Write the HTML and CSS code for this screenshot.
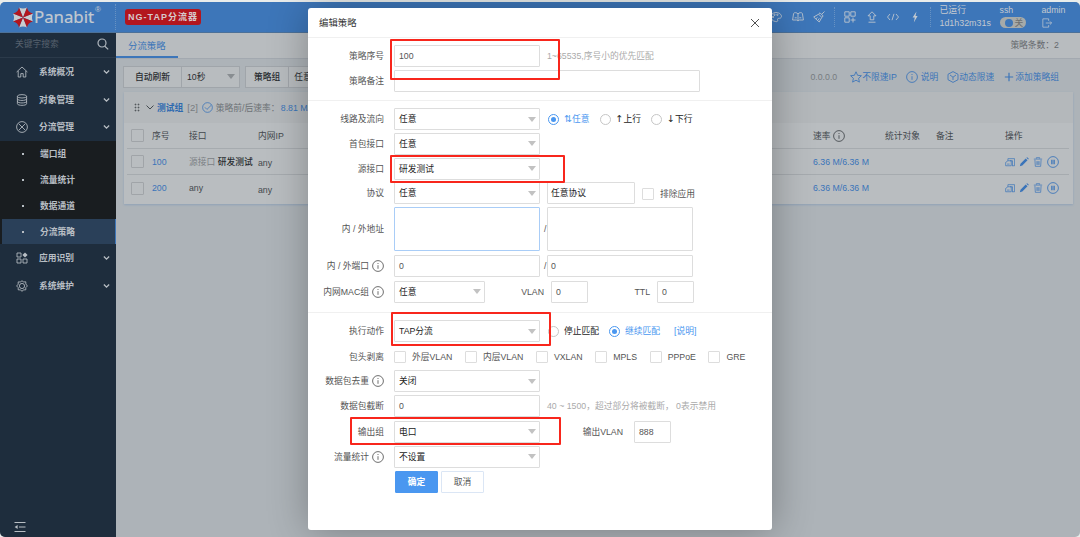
FILE: index.html
```html
<!DOCTYPE html>
<html lang="zh-CN">
<head>
    <meta charset="UTF-8">
    <meta name="viewport" content="width=device-width, initial-scale=1.0">
    <title>Panabit</title>
    <link rel="stylesheet" href="styles.css">
</head>
<body>
    <svg class="sprite">
        <symbol id="i-search" viewBox="0 0 12 12"><circle cx="5" cy="5" r="4"/><path d="M7.8 8.2l3.4 3.2"/></symbol>
        <symbol id="i-home" viewBox="0 0 12 12"><path d="M.6 6L6 1l5.400 5M2.200 5v6h2.600V7.600h2.400V11h2.600V5"/></symbol>
        <symbol id="i-db" viewBox="0 0 12 12"><ellipse cx="6" cy="2.300" rx="4.600" ry="1.700"/><path d="M1.400 2.300v7.400c0 2.200 9.200 2.200 9.200 0V2.300M1.400 4.800c0 2.200 9.200 2.200 9.200 0M1.400 7.300c0 2.200 9.200 2.200 9.200 0"/></symbol>
        <symbol id="i-flow" viewBox="0 0 12 12"><circle cx="6" cy="6" r="5.400"/><path d="M2.800 2.800l6.400 6.400M9.200 2.800L2.800 9.200"/></symbol>
        <symbol id="i-apps" viewBox="0 0 12 12"><path d="M1 1h4v4H1zM1 7h4v4H1zM7 7h4v4H7z"/><path class="fill" d="M9 .4L11.600 3 9 5.600 6.400 3z"/></symbol>
        <symbol id="i-gear" viewBox="0 0 12 12"><circle cx="6" cy="6" r="2.600"/><path d="M6 .6l1.300 1.400 2.500-.2v2.200L11.400 6l-1.600 1.600v2.200l-2.500.1L6 11.400 4.700 9.900l-2.500-.1V7.600L.6 6l1.600-1.800V1.900l2.500.1z"/></symbol>
        <symbol id="i-down" viewBox="0 0 8 6"><path d="M1 1.300l3 3 3-3"/></symbol>
        <symbol id="i-fold" viewBox="0 0 12 12"><path d="M.5 1.500h11M5 6h6.500M.5 10.500h11"/><path class="fill" d="M3.600 4v4L.6 6z"/></symbol>
        <symbol id="i-palette" viewBox="0 0 12 12"><path d="M6 1.500c6 0 7 6 3.200 5.800-2-.1-1.800 1-1.500 1.800.5 1.400-1 1.700-2 1.500C-1 9.500-.5 1.500 6 1.500z"/><circle cx="3" cy="6" r=".7"/><circle cx="4.500" cy="3.800" r=".7"/><circle cx="7.400" cy="3.800" r=".7"/></symbol>
        <symbol id="i-book" viewBox="0 0 12 12"><path d="M6 3C5 1.300 2.300 1.300 1.600 2.500L.6 9h4.200L6 10l1.200-1h4.200l-1-6.500C9.700 1.300 7 1.300 6 3zM6 3v6.500M2.700 6.800h2M7.300 6.800h2"/></symbol>
        <symbol id="i-brush" viewBox="0 0 12 12"><path d="M11.500.5L8.800 3.200M7 1.800L10.200 5 8.800 6.400 5.600 3.200zM5.600 3.200L.7 6l5.500 5 2.600-4.600M3 7.700l1.500-1.200M5 9.300l1.300-2"/></symbol>
        <symbol id="i-grid" viewBox="0 0 12 12"><path d="M.8.8h4.400v4.400H.8zM6.800.8h4.400v4.400H6.800zM.8 6.800h4.400v4.400H.8zM9 6.500v5M6.500 9h5"/></symbol>
        <symbol id="i-up" viewBox="0 0 12 12"><path d="M6 .8l4 4H7.800v4H4.200v-4H2zM2.500 11.200h7"/></symbol>
        <symbol id="i-code" viewBox="0 0 12 12"><path d="M3 3L.5 6 3 9M9 3l2.500 3L9 9M7 2.800L5 9.200"/></symbol>
        <symbol id="i-bolt" viewBox="0 0 12 12"><path class="fill" d="M7.500 .5L3.600 6.600h2.200L4.800 11.500l3.800-6.400H6.500z"/></symbol>
        <symbol id="i-exit" viewBox="0 0 12 12"><path d="M8 3.500V1H1v10h7V8.500M4.500 6h7M9.500 4l2 2-2 2"/></symbol>
        <symbol id="i-star" viewBox="0 0 12 12"><path d="M6 .8l1.600 3.500 3.800.4-2.800 2.600.8 3.800L6 9.200l-3.400 1.900.8-3.800L.6 4.700l3.800-.4z"/></symbol>
        <symbol id="i-info" viewBox="0 0 12 12"><circle cx="6" cy="6" r="5.400"/><path d="M6 5.200v3.600M6 3v1"/></symbol>
        <symbol id="i-cube" viewBox="0 0 12 12"><path d="M6 .6l5 2.700v5.400l-5 2.700-5-2.700V3.300zM3 4l3 2.200L9 4M6 6.200V9"/></symbol>
        <symbol id="i-plus" viewBox="0 0 12 12"><path d="M6 1v10M1 6h10"/></symbol>
        <symbol id="i-check" viewBox="0 0 12 12"><circle cx="6" cy="6" r="5.300"/><path d="M3.200 5.800l2.200 2.300 4.900-4.800"/></symbol>
        <symbol id="i-copy" viewBox="0 0 12 12"><path d="M3.500 4.500V2h8v8.500h-3M.8 6.500L3.500 4.500h4v6H.8zM6 4.500h3v6M2.500 8.500h3"/></symbol>
        <symbol id="i-pen" viewBox="0 0 12 12"><path class="fill" d="M1 11l.8-3L8 1.800l2.200 2.200L4 10.200zM8.800 1l1-.8 2 2-.8.9z"/></symbol>
        <symbol id="i-trash" viewBox="0 0 12 12"><path d="M4 2V.8h4V2M1 2.500h10M2.300 3.500l.5 7.700h6.400l.5-7.700M4.700 5v4.500M6 5v4.500M7.300 5v4.500"/></symbol>
        <symbol id="i-pause" viewBox="0 0 12 12"><circle cx="6" cy="6" r="5.400"/><path class="bar" d="M4.900 3.800v4.400M7.100 3.800v4.400"/></symbol>
        <symbol id="i-close" viewBox="0 0 12 12"><path d="M2 2l8 8M10 2l-8 8"/></symbol>
    </svg>

    <div class="app">
        <header class="header">
            <svg class="logo" viewBox="0 0 20 20">
                <path fill="#c9cccf" d="M10 10L6 0q4 2 8 0zM10 10l10-4q-2 4 0 8zM10 10l4 10q-4-2-8 0zM10 10L0 14q2-4 0-8z"/>
                <path fill="#b3161e" d="M10 10L0 6q5-1 6-6zM10 10l4-10q1 5 6 6zM10 10l10 4q-5 1-6 6zM10 10L6 20q-1-5-6-6z"/>
            </svg>
            <span class="brand">Panabit</span><sup class="reg">®</sup>
            <span class="product">NG-TAP分流器</span>
            <div class="tools">
                <svg><use href="#i-palette"/></svg>
                <svg><use href="#i-book"/></svg>
                <svg><use href="#i-brush"/></svg>
            </div>
            <div class="tools system">
                <svg><use href="#i-grid"/></svg>
                <svg><use href="#i-up"/></svg>
                <svg><use href="#i-code"/></svg>
                <svg><use href="#i-bolt"/></svg>
            </div>
            <div class="stat uptime"><span>已运行</span><span>1d1h32m31s</span></div>
            <div class="stat ssh"><span>ssh</span><span class="toggle"><i></i>关</span></div>
            <div class="stat user"><span>admin</span><svg><use href="#i-exit"/></svg></div>
        </header>

        <div class="body">
            <aside class="sidebar">
                <div class="search"><span>关键字搜索</span><svg><use href="#i-search"/></svg></div>
                <div class="menu"><svg><use href="#i-home"/></svg><span>系统概况</span><svg class="arrow"><use href="#i-down"/></svg></div>
                <div class="menu"><svg><use href="#i-db"/></svg><span>对象管理</span><svg class="arrow"><use href="#i-down"/></svg></div>
                <div class="menu"><svg><use href="#i-flow"/></svg><span>分流管理</span><svg class="arrow"><use href="#i-down"/></svg></div>
                <div class="submenu">
                    <div>端口组</div>
                    <div>流量统计</div>
                    <div>数据通道</div>
                    <div class="active">分流策略</div>
                </div>
                <div class="menu"><svg><use href="#i-apps"/></svg><span>应用识别</span><svg class="arrow"><use href="#i-down"/></svg></div>
                <div class="menu"><svg><use href="#i-gear"/></svg><span>系统维护</span><svg class="arrow"><use href="#i-down"/></svg></div>
                <svg class="fold"><use href="#i-fold"/></svg>
            </aside>

            <main class="content">
                <div class="tabs"><span class="tab">分流策略</span><span class="count">策略条数：2</span></div>
                <div class="toolbar">
                    <div class="combo refresh"><b>自动刷新</b><span>10秒</span><i class="caret"></i></div>
                    <div class="combo group"><b>策略组</b><span>任意</span></div>
                    <div class="links">
                        <span class="ip">0.0.0.0</span>
                        <a class="star"><svg><use href="#i-star"/></svg>不限速IP</a>
                        <a class="help"><svg><use href="#i-info"/></svg>说明</a>
                        <a class="dyn"><svg><use href="#i-cube"/></svg>动态限速</a>
                        <a class="add"><svg><use href="#i-plus"/></svg>添加策略组</a>
                    </div>
                </div>
                <section class="card">
                    <div class="card-head">
                        <span class="grip"></span>
                        <svg class="arrow"><use href="#i-down"/></svg>
                        <b>测试组</b><span class="num">[2]</span>
                        <svg class="check"><use href="#i-check"/></svg>
                        <span class="rate">策略前/后速率：</span><a>8.81 M/8.81 M</a>
                    </div>
                    <div class="row head">
                        <i class="box"></i><span>序号</span><span>接口</span><span>内网IP</span>
                        <span class="with-icon">速率<svg><use href="#i-info"/></svg></span><span>统计对象</span><span>备注</span><span>操作</span>
                    </div>
                    <div class="row">
                        <i class="box"></i><a>100</a><span><em>源接口</em> <b>研发测试</b></span><span class="low">any</span>
                        <a>6.36 M/6.36 M</a><span></span><span></span>
                        <span class="ops"><svg><use href="#i-copy"/></svg><svg><use href="#i-pen"/></svg><svg><use href="#i-trash"/></svg><svg class="pause"><use href="#i-pause"/></svg></span>
                    </div>
                    <div class="row">
                        <i class="box"></i><a>200</a><span>any</span><span class="low">any</span>
                        <a>6.36 M/6.36 M</a><span></span><span></span>
                        <span class="ops"><svg><use href="#i-copy"/></svg><svg><use href="#i-pen"/></svg><svg><use href="#i-trash"/></svg><svg class="pause"><use href="#i-pause"/></svg></span>
                    </div>
                </section>
            </main>
        </div>
    </div>

    <div class="modal">
        <div class="modal-title"><span>编辑策略</span><svg><use href="#i-close"/></svg></div>
        <div class="fields first">
            <div class="field"><label>策略序号</label><div class="input wide">100</div><span class="hint">1~65535,序号小的优先匹配</span></div>
            <div class="field"><label>策略备注</label><div class="input full"></div></div>
        </div>
        <div class="fields second">
            <div class="field"><label>线路及流向</label><div class="input wide dark">任意<i class="caret"></i></div>
                <span class="radio on"><i></i><em>⇅</em>任意</span><span class="radio"><i></i><em>↑</em>上行</span><span class="radio"><i></i><em>↓</em>下行</span>
            </div>
            <div class="field"><label>首包接口</label><div class="input wide dark">任意<i class="caret"></i></div></div>
            <div class="field"><label>源接口</label><div class="input wide dark">研发测试<i class="caret"></i></div></div>
            <div class="field"><label>协议</label><div class="input wide dark">任意<i class="caret"></i></div><div class="input proto dark">任意协议</div><span class="tick exclude"><i class="box"></i>排除应用</span></div>
            <div class="field tall"><label>内 / 外地址</label><div class="input wide focus"></div><span class="slash">/</span><div class="input half"></div></div>
            <div class="field port"><label>内 / 外端口<svg><use href="#i-info"/></svg></label><div class="input wide">0</div><span class="slash">/</span><div class="input half">0</div></div>
            <div class="field mac"><label>内网MAC组<svg><use href="#i-info"/></svg></label><div class="input small dark">任意<i class="caret"></i></div><span class="sub vlan">VLAN</span><div class="input tiny">0</div><span class="sub ttl">TTL</span><div class="input tiny">0</div></div>
        </div>
        <div class="fields third">
            <div class="field"><label>执行动作</label><div class="input wide dark">TAP分流<i class="caret"></i></div>
                <span class="radio stop"><i></i>停止匹配</span><span class="radio on next"><i></i>继续匹配</span><a class="explain">[说明]</a>
            </div>
            <div class="field strip"><label>包头剥离</label>
                <span class="tick"><i class="box"></i>外层VLAN</span><span class="tick"><i class="box"></i>内层VLAN</span><span class="tick"><i class="box"></i>VXLAN</span><span class="tick"><i class="box"></i>MPLS</span><span class="tick"><i class="box"></i>PPPoE</span><span class="tick"><i class="box"></i>GRE</span>
            </div>
            <div class="field"><label>数据包去重<svg><use href="#i-info"/></svg></label><div class="input wide dark">关闭<i class="caret"></i></div></div>
            <div class="field"><label>数据包截断</label><div class="input wide">0</div><span class="hint">40 ~ 1500，超过部分将被截断， 0表示禁用</span></div>
            <div class="field"><label>输出组</label><div class="input wide dark">电口<i class="caret"></i></div><span class="sub out">输出VLAN</span><div class="input tiny">888</div></div>
            <div class="field"><label>流量统计<svg><use href="#i-info"/></svg></label><div class="input wide dark">不设置<i class="caret"></i></div></div>
            <div class="buttons"><button class="primary">确定</button><button>取消</button></div>
        </div>
        <div class="mark mark-order"></div>
        <div class="mark mark-source"></div>
        <div class="mark mark-action"></div>
        <div class="mark mark-output"></div>
    </div>
</body>
</html>
```

FILE: styles.css
```css
* {
    box-sizing: border-box;
}

body {
    margin: 0;
    padding-top: 2px;
    width: 1080px;
    height: 537px;
    overflow: hidden;
    background-color: #e9eceb;
    font-family: 'Liberation Sans', 'Noto Sans CJK SC', sans-serif;
    font-size: 8.75px;
    line-height: 12px;
    color: #43484d;
}

svg {
    width: 12px;
    height: 12px;
    flex: none;
    fill: none;
    stroke: currentColor;
    stroke-width: .85;
}

.sprite {
    display: none;
}

.fill {
    fill: currentColor;
    stroke: none;
}

.bar {
    stroke-width: 1.3;
}

i, em {
    font-style: normal;
}

a {
    color: #3a74b9;
}

.app {
    height: 535px;
    border-radius: 5px;
    overflow: hidden;
    background-color: #adb3b8;
}

/* header */
.header {
    display: flex;
    align-items: center;
    height: 31px;
    background-color: #3d76b9;
    border-bottom: 1px solid #4c7199;
    color: #c3c9d0;
}

.logo {
    width: 20px;
    height: 21px;
    margin-left: 13px;
    stroke: none;
}

.brand {
    width: 61px;
    margin-left: 1px;
    font-family: 'Noto Sans', sans-serif;
    font-size: 16.8px;
    line-height: 28px;
    -webkit-text-stroke: .2px #c3c9d0;
}

.reg {
    width: 21px;
    height: 26px;
    font-size: 8px;
    border-right: 1px dotted #6792c3;
}

.product {
    width: 76px;
    height: 16px;
    margin-left: 9px;
    border-radius: 3px;
    background-color: #b3161e;
    color: #d6c9cc;
    font-size: 9px;
    font-weight: bold;
    line-height: 16px;
    letter-spacing: 1px;
    text-align: center;
    white-space: nowrap;
}

.tools {
    display: flex;
    align-items: center;
    gap: 9.500px;
    height: 20px;
    margin-left: 569px;
    padding-right: 9px;
    border-right: 1px dotted #6792c3;
}

.tools.system {
    margin-left: 9px;
    padding-right: 9px;
}

.stat {
    display: flex;
    flex-direction: column;
    gap: 1px;
    height: 26px;
    margin-left: 9px;
    white-space: nowrap;
}

.uptime {
    width: 51px;
    font-size: 8.9px;
}

.ssh {
    width: 27px;
}

.user {
    margin-left: 15px;
}

.user svg {
    width: 10px;
    height: 10px;
    margin-top: 1px;
}

.toggle {
    display: flex;
    align-items: center;
    width: 26px;
    height: 11px;
    padding-left: 5px;
    border-radius: 6px;
    background-color: #a6aaa9;
    color: #6d6f6f;
}

.toggle i {
    width: 8px;
    height: 8px;
    margin-right: 2px;
    border-radius: 50%;
    background-color: #3d76b9;
}

/* sidebar */
.body {
    display: flex;
    height: 504px;
}

.sidebar {
    display: flex;
    flex-direction: column;
    width: 116px;
    background-color: #1e2d3d;
    color: #b8bec4;
    font-weight: bold;
}

.search {
    display: flex;
    align-items: center;
    justify-content: space-between;
    height: 25px;
    padding: 0 7px 2px 15px;
    border-bottom: 1px solid #2b3a4a;
    color: #56616d;
    font-weight: normal;
}

.search svg {
    color: #b0b7be;
    stroke-width: 1.2;
}

.menu {
    display: flex;
    align-items: center;
    height: 27.800px;
    padding: 0 6px 0 15.500px;
}

.menu span {
    flex: 1;
    margin-left: 11.500px;
}

.menu .arrow {
    width: 7px;
    height: 6px;
    stroke-width: 1.500;
}

.submenu {
    background-color: #191d20;
}

.submenu div {
    display: flex;
    align-items: center;
    height: 26px;
    padding-left: 22px;
}

.submenu div::before {
    content: "";
    width: 2px;
    height: 2px;
    margin-right: 16px;
    background-color: #b8bec4;
}

.submenu .active {
    height: 25px;
    margin-left: 2px;
    padding-left: 20px;
    background-color: #2a4059;
    border-right: 1px solid #3d76b9;
}

.fold {
    margin: auto 0 4px 14px;
    stroke-width: 1.2;
}

/* content */
.content {
    flex: 1;
    min-width: 0;
}

.tabs {
    display: flex;
    justify-content: space-between;
    height: 26px;
    padding-right: 21px;
    border-bottom: 1px solid #a3a9b0;
    background-color: #b8bcbf;
    line-height: 25px;
}

.tab {
    width: 62px;
    padding-left: 12px;
    border-bottom: 2px solid #3d76b9;
    color: #3a74b9;
    font-size: 9.400px;
}

.count {
    color: #65696d;
}

.toolbar {
    display: flex;
    align-items: center;
    height: 33px;
    padding: 2px 21px 0 7px;
}

.combo {
    display: flex;
    align-items: center;
    height: 22px;
    border: 1px solid #a0a5aa;
    background-color: #b8bcbf;
}

.combo b {
    padding: 0 11px;
    border-right: 1px solid #a0a5aa;
    line-height: 20px;
    font-weight: 500;
    color: #292d31;
}

.combo span {
    padding-left: 5px;
    color: #292d31;
}

.refresh {
    width: 117px;
}

.group {
    width: 130px;
    margin-left: 5px;
}

.group b {
    padding: 0 8px;
}

.caret {
    margin: 0 3px 0 auto;
    border: 4px solid transparent;
    border-top: 5px solid #c2c2c2;
    border-bottom: 0;
}

.combo .caret {
    margin-right: 4px;
    border-top-color: #888d91;
}

.links {
    display: flex;
    align-items: center;
    margin-left: auto;
}

.links a {
    display: flex;
    align-items: center;
}

.ip {
    margin-right: 13px;
    color: #777c80;
}

.help, .dyn {
    margin-left: 9px;
}

.help svg {
    margin-right: 3px;
}

.add {
    margin-left: 10px;
}

.add svg {
    width: 10px;
    height: 10px;
    margin-right: 1px;
    stroke-width: 1.4;
}

.card {
    width: 949px;
    height: 112px;
    margin-left: 8px;
    background-color: #b9bdc0;
    box-shadow: 0 1px 2px #8fa2b8;
}

.card-head {
    display: flex;
    align-items: center;
    height: 31px;
    padding-left: 10px;
    background-color: #b4b8bb;
}

.card-head b {
    margin-left: 2px;
    color: #2e6ab0;
}

.grip {
    width: 6px;
    height: 9px;
    margin-right: 5px;
    background-image: radial-gradient(circle, #53585c 0.8px, transparent 1.1px);
    background-size: 3px 3px;
}

.card-head .arrow {
    width: 10px;
    height: 7px;
}

.num {
    margin: 0 4px;
    color: #777c80;
    font-size: 9.500px;
}

.check {
    width: 11px;
    height: 11px;
    margin-right: 3px;
    color: #3a74b9;
}

.rate {
    width: 65px;
    color: #6d7276;
}

.row {
    display: grid;
    grid-template-columns: 21px 37px 69px 555px 72px 51px 69px 1fr;
    align-items: center;
    height: 26px;
    margin: 0 4px 0 3px;
    padding-left: 4px;
    border-bottom: 1px solid #a6abaf;
    white-space: nowrap;
}

.row:last-child {
    border: 0;
}

.row em {
    color: #7c8185;
}

.row b {
    font-weight: 500;
    color: #292d31;
}

.low {
    padding-top: 3px;
}

.with-icon {
    display: flex;
    align-items: center;
    gap: 2px;
}

.box {
    width: 13px;
    height: 13px;
    border: 1px solid #a0a4a8;
    border-radius: 1px;
}

.ops {
    display: flex;
    align-items: center;
    gap: 4px;
    color: #3a74b9;
}

.ops svg {
    width: 10px;
    height: 10px;
}

.ops .pause {
    width: 12px;
    height: 12px;
}

/* dialog */
.modal {
    position: absolute;
    top: 8px;
    left: 308px;
    width: 464px;
    height: 522px;
    border-radius: 3px;
    background-color: #fff;
    box-shadow: 1px 1px 40px rgba(0, 0, 0, .3);
    color: #555;
}

.modal-title {
    display: flex;
    align-items: center;
    justify-content: space-between;
    height: 30px;
    padding: 0 11px;
    border-bottom: 1px solid #f0f0f0;
    color: #333;
    font-size: 9.400px;
}

.fields {
    display: flex;
    flex-direction: column;
    gap: 2.800px;
    border-bottom: 1px solid #f0f0f0;
}

.first {
    height: 63px;
    padding-top: 7px;
}

.second {
    height: 212px;
    padding-top: 7px;
}

.third {
    gap: 3.150px;
    padding-top: 7px;
    border: 0;
}

.field {
    display: flex;
    align-items: center;
    flex: none;
    height: 22px;
    white-space: nowrap;
}

.field label {
    display: flex;
    align-items: center;
    justify-content: flex-end;
    gap: 3px;
    width: 76px;
    margin-right: 10px;
}

.input {
    display: flex;
    align-items: center;
    height: 22px;
    padding-left: 4px;
    border: 1px solid #ddd;
    border-radius: 1px;
}

.dark {
    color: #222;
}

.wide {
    width: 146px;
}

.full {
    width: 306px;
}

.half {
    width: 146px;
}

.half, .proto {
    padding-left: 3px;
}

.proto {
    width: 88px;
    margin-left: 7px;
}

.small {
    width: 91px;
}

.tiny {
    width: 37px;
}

.focus {
    border-color: #a9cdf7;
}

.tall {
    margin-top: -.5px;
}

.tall, .tall .input {
    height: 44px;
}

.port {
    margin-top: 1.5px;
}

.mac {
    margin-top: 1px;
}

.slash {
    width: 7px;
    padding-left: 4px;
}

.hint {
    margin-left: 7px;
    color: #aaa;
}

.sub {
    text-align: right;
    margin-right: 7px;
}

.vlan {
    width: 59px;
}

.ttl {
    width: 62px;
}

.out {
    width: 83px;
    margin-right: 11px;
}

.radio {
    display: flex;
    align-items: center;
    margin-left: 10px;
    color: #222;
}

.radio i {
    display: flex;
    align-items: center;
    justify-content: center;
    width: 11px;
    height: 11px;
    margin-right: 5px;
    border: 1px solid #c6c6c6;
    border-radius: 50%;
}

.radio em {
    width: 8px;
    font-family: 'DejaVu Sans', sans-serif;
    font-size: 9.500px;
}

.wide + .radio {
    margin-left: 8px;
}

.on {
    color: #4a97f0;
}

.on i {
    border-color: #4a97f0;
}

.on i::after {
    content: "";
    width: 5px;
    height: 5px;
    border-radius: 50%;
    background-color: #4a97f0;
}

.explain {
    margin-left: 14px;
    color: #4a97f0;
}

.tick {
    display: flex;
    align-items: center;
    gap: 6px;
    margin-right: 12.6px;
}

.tick .box {
    width: 12px;
    height: 12px;
    border-color: #ddd;
}

.exclude {
    margin-left: 7px;
    padding-top: 2px;
}

.strip {
    height: 22px;
    padding-top: 2px;
}

.buttons {
    display: flex;
    gap: 3px;
    margin-left: 87px;
}

button {
    width: 43px;
    height: 22px;
    padding: 0;
    border: 1px solid #dbe6f5;
    border-radius: 1px;
    background-color: #fff;
    color: #555;
    font: inherit;
}

.primary {
    border-color: #4a97f0;
    background-color: #4a97f0;
    color: #fff;
    font-weight: bold;
}

/* highlight frames over the dialog */
.mark {
    position: absolute;
    border: 2px solid #f8261c;
    border-radius: 1px;
}

.mark-order {
    top: 31px;
    left: 82px;
    width: 170px;
    height: 41px;
}

.mark-source {
    top: 147px;
    left: 82px;
    width: 175px;
    height: 28px;
}

.mark-action {
    top: 304px;
    left: 83px;
    width: 160px;
    height: 34px;
}

.mark-output {
    top: 409px;
    left: 42px;
    width: 211px;
    height: 28px;
}
```
